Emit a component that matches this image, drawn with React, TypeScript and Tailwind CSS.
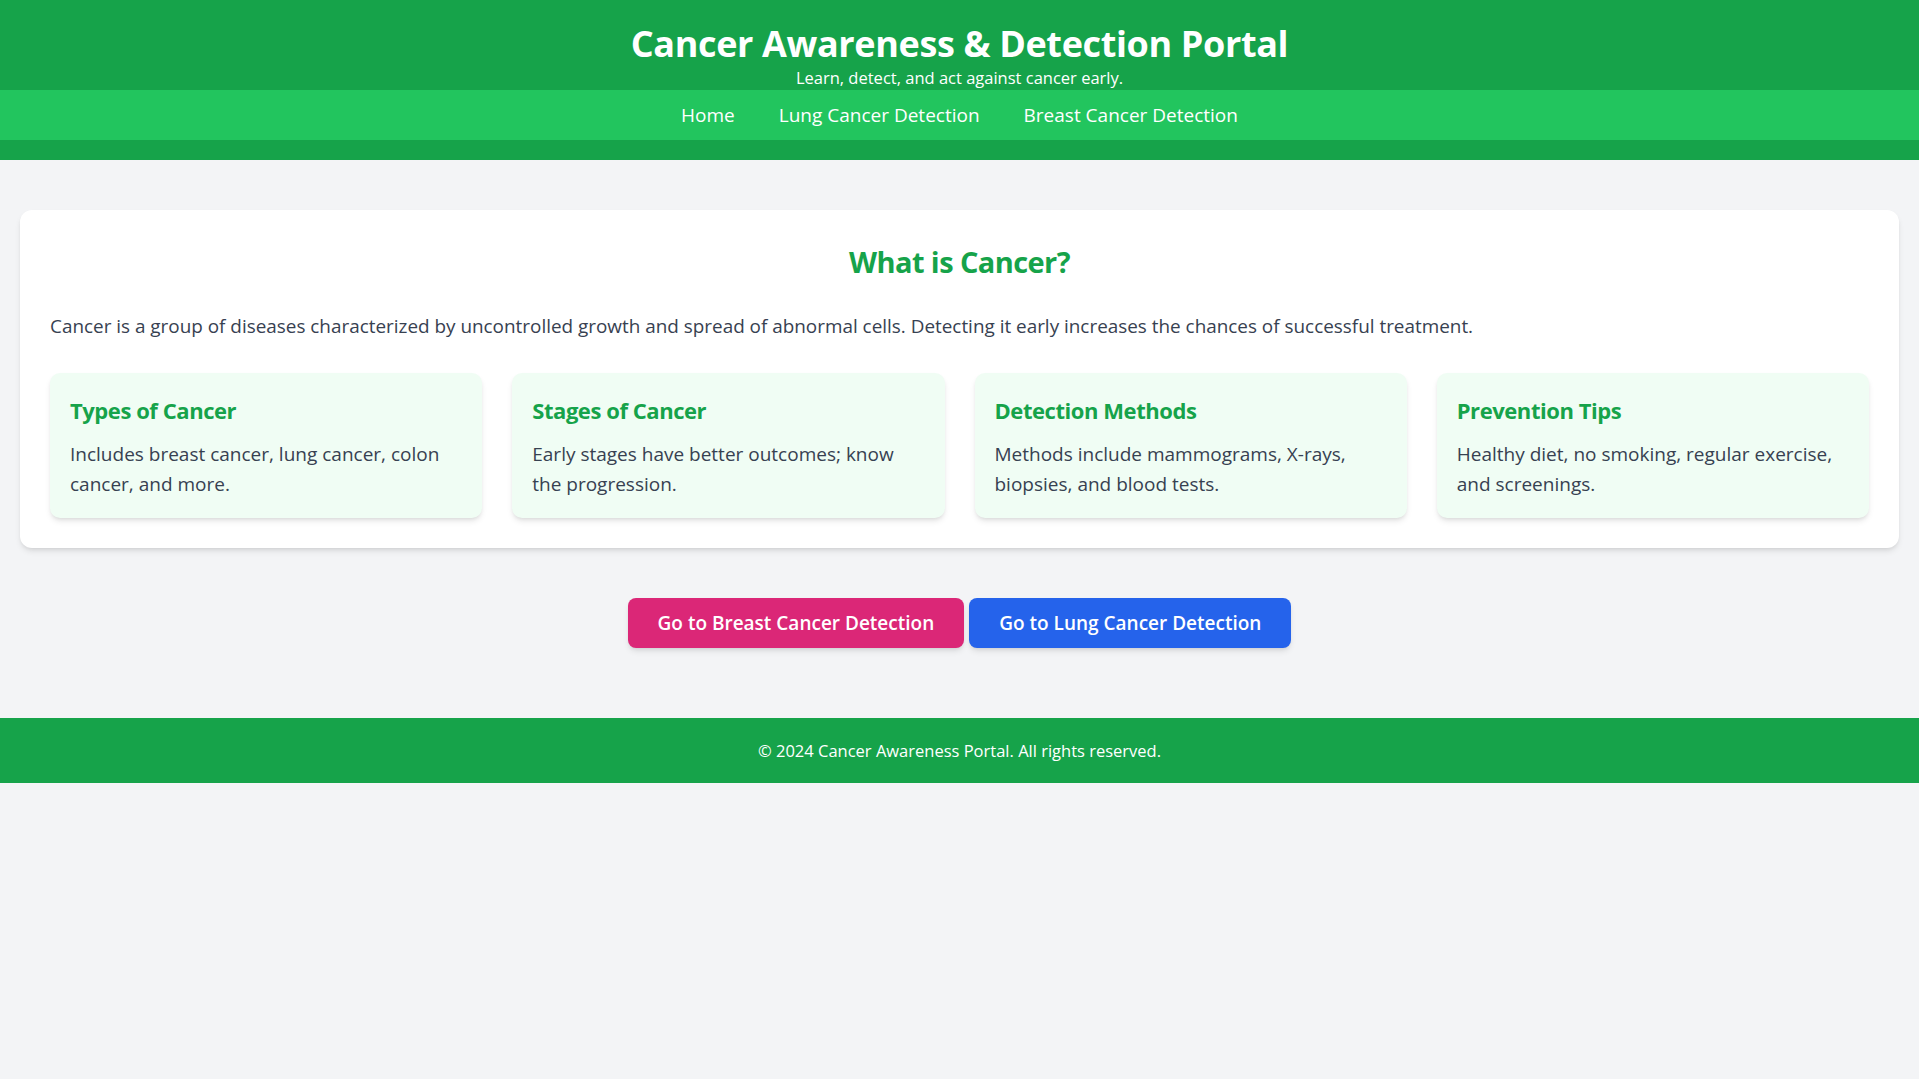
const topics = [
  {
    title: "Types of Cancer",
    text: "Includes breast cancer, lung cancer, colon cancer, and more.",
  },
  {
    title: "Stages of Cancer",
    text: "Early stages have better outcomes; know the progression.",
  },
  {
    title: "Detection Methods",
    text: "Methods include mammograms, X-rays, biopsies, and blood tests.",
  },
  {
    title: "Prevention Tips",
    text: "Healthy diet, no smoking, regular exercise, and screenings.",
  },
];

const App = () => {
  return (
    <div className="min-h-screen bg-[#f3f4f6] font-['Segoe_UI','Open_Sans',sans-serif]">
      <header className="bg-[#16a34a] pt-6 pb-5 text-center text-white">
        <h1 className="text-4xl leading-10 font-bold tracking-[-0.01em]">
          Cancer Awareness &amp; Detection Portal
        </h1>
        <p className="mt-0.5 text-[16.5px] leading-6">
          Learn, detect, and act against cancer early.
        </p>
        <nav className="flex h-[50px] items-center justify-center gap-11 bg-[#22c55e] text-[19px]">
          <a href="#">Home</a>
          <a href="#">Lung Cancer Detection</a>
          <a href="#">Breast Cancer Detection</a>
        </nav>
      </header>

      <main className="px-5 pt-[50px] pb-[70px]">
        <section className="rounded-xl bg-white p-[30px] shadow-md">
          <h2 className="mt-1 mb-8 text-center text-[29px] leading-9 font-bold tracking-[-0.02em] text-[#16a34a]">
            What is Cancer?
          </h2>
          <p className="mb-[33px] text-[18.9px] leading-7 text-[#374151]">
            Cancer is a group of diseases characterized by uncontrolled growth
            and spread of abnormal cells. Detecting it early increases the
            chances of successful treatment.
          </p>
          <div className="grid grid-cols-4 gap-[30px]">
            {topics.map((t) => (
              <div
                key={t.title}
                className="rounded-[10px] bg-[#f0fdf4] px-5 pt-[21px] pb-[19px] shadow-md"
              >
                <h3 className="mb-[13px] text-[22px] leading-8 font-bold tracking-[-0.02em] text-[#16a34a]">
                  {t.title}
                </h3>
                <p className="text-[19px] leading-[30px] text-[#374151]">
                  {t.text}
                </p>
              </div>
            ))}
          </div>
        </section>

        <div className="mt-[50px] flex justify-center gap-[5px]">
          <a
            href="#"
            className="flex h-[50px] items-center rounded-lg bg-[#db2777] px-[30px] text-[19px] font-semibold text-white shadow-md"
          >
            Go to Breast Cancer Detection
          </a>
          <a
            href="#"
            className="flex h-[50px] items-center rounded-lg bg-[#2563eb] px-[30px] text-[19px] font-semibold text-white shadow-md"
          >
            Go to Lung Cancer Detection
          </a>
        </div>
      </main>

      <footer className="bg-[#16a34a] py-5 text-center text-[16.5px] leading-[25px] text-white">
        © 2024 Cancer Awareness Portal. All rights reserved.
      </footer>
    </div>
  );
};

export default App;
